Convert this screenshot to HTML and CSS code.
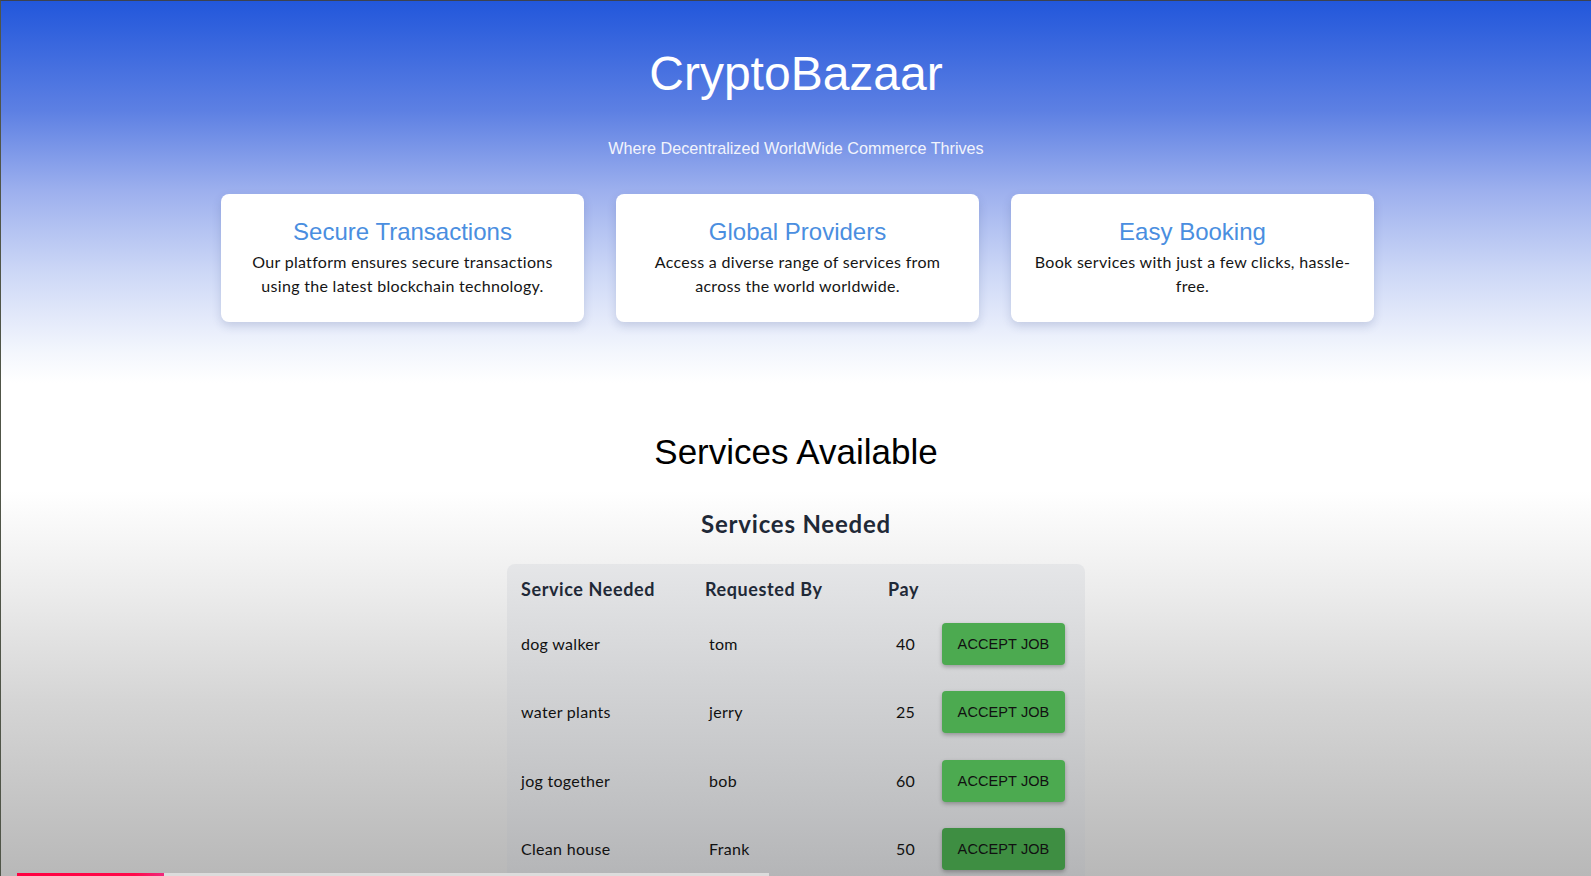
FILE: index.html
```html
<!DOCTYPE html>
<html lang="en">
<head>
<meta charset="utf-8">
<title>CryptoBazaar</title>
<link rel="stylesheet" href="styles.css">
</head>
<body>
<div class="page">
  <header class="hero">
    <h1 class="brand">CryptoBazaar</h1>
    <p class="tagline">Where Decentralized WorldWide Commerce Thrives</p>
    <div class="features">
      <div class="card">
        <h3 class="card-title">Secure Transactions</h3>
        <p class="card-text">Our platform ensures secure transactions using the latest blockchain technology.</p>
      </div>
      <div class="card">
        <h3 class="card-title">Global Providers</h3>
        <p class="card-text">Access a diverse range of services from across the world worldwide.</p>
      </div>
      <div class="card">
        <h3 class="card-title">Easy Booking</h3>
        <p class="card-text">Book services with just a few clicks, hassle-free.</p>
      </div>
    </div>
  </header>

  <section class="services">
    <h2 class="services-title">Services Available</h2>
    <h3 class="needed-title">Services Needed</h3>
    <div class="table-box">
      <table class="jobs">
        <colgroup>
          <col class="c-service">
          <col class="c-by">
          <col class="c-pay">
          <col class="c-action">
        </colgroup>
        <thead>
          <tr>
            <th>Service Needed</th>
            <th>Requested By</th>
            <th class="pay">Pay</th>
            <th></th>
          </tr>
        </thead>
        <tbody>
          <tr>
            <td>dog walker</td>
            <td class="by">tom</td>
            <td class="pay">40</td>
            <td><button class="accept">ACCEPT JOB</button></td>
          </tr>
          <tr>
            <td>water plants</td>
            <td class="by">jerry</td>
            <td class="pay">25</td>
            <td><button class="accept">ACCEPT JOB</button></td>
          </tr>
          <tr>
            <td>jog together</td>
            <td class="by">bob</td>
            <td class="pay">60</td>
            <td><button class="accept">ACCEPT JOB</button></td>
          </tr>
          <tr>
            <td>Clean house</td>
            <td class="by">Frank</td>
            <td class="pay">50</td>
            <td><button class="accept accept-hover">ACCEPT JOB</button></td>
          </tr>
        </tbody>
      </table>
    </div>
  </section>
</div>
<div class="progress"><span class="progress-played"></span></div>
</body>
</html>
```

FILE: styles.css
```css
html {
  background: #b9b9b9;
}

body {
  margin: 0;
  font-family: Lato, "Noto Sans", sans-serif;
  border-top: 1px solid #3c4250;
  border-left: 1px solid #505548;
  overflow: hidden;
  height: 875px;
}

.page {
  min-height: 1000px;
  background: linear-gradient(to bottom,
    #2257db 0px,
    #5d80e3 110px,
    #9db0ee 190px,
    #ccd7f6 270px,
    #f3f6fd 350px,
    #ffffff 382px,
    #ffffff 490px,
    #ececec 590px,
    #d5d5d5 700px,
    #b8b8b8 876px,
    #b0b0b0 1000px);
}

.hero {
  padding-top: 44px;
  text-align: center;
}

.brand {
  margin: 0;
  font-family: "Liberation Sans", Arial, sans-serif;
  font-weight: 400;
  font-size: 48px;
  line-height: 58px;
  color: #ffffff;
}

.tagline {
  margin: 35px 0 0;
  font-family: "Liberation Sans", Arial, sans-serif;
  font-size: 16.2px;
  line-height: 20px;
  color: #f2f4fc;
}

.features {
  margin-top: 36px;
  display: flex;
  justify-content: center;
  gap: 32px;
  padding-left: 3px;
}

.card {
  width: 363px;
  box-sizing: border-box;
  height: 128px;
  padding: 24px 21px 0;
  background: #ffffff;
  border-radius: 8px;
  box-shadow: 0 4px 10px rgba(40, 60, 120, 0.18);
}

.card-title {
  margin: 0 0 4px;
  font-family: "Liberation Sans", Arial, sans-serif;
  font-weight: 400;
  font-size: 24px;
  line-height: 28px;
  color: #4a8ee0;
}

.card-text {
  margin: 0;
  font-size: 16px;
  line-height: 24px;
  letter-spacing: 0.3px;
  color: #151515;
}

.services {
  text-align: center;
  padding-top: 110px;
}

.services-title {
  margin: 0;
  font-family: "Liberation Sans", Arial, sans-serif;
  font-weight: 400;
  font-size: 35px;
  line-height: 40px;
  color: #000000;
}

.needed-title {
  margin: 37px 0 0;
  font-size: 24px;
  line-height: 29px;
  font-weight: 700;
  letter-spacing: 0.8px;
  color: #1f2937;
}

.table-box {
  width: 576px;
  margin: 26px auto 0;
  padding-left: 2px;
  border-radius: 8px;
  background: linear-gradient(to bottom, #e5e6e8 0px, #d2d3d5 120px, #c0c1c3 240px, #b3b4b6 320px);
}

.jobs {
  width: 576px;
  border-collapse: collapse;
  table-layout: fixed;
  text-align: left;
}

.c-service { width: 184px; }
.c-by { width: 184px; }
.c-pay { width: 53px; }
.c-action { width: 155px; }

.jobs th {
  padding: 15px 12px 10px;
  font-size: 18px;
  line-height: 21px;
  font-weight: 700;
  letter-spacing: 0.6px;
  color: #1f2937;
}

.jobs td {
  padding: 13px 12px;
  height: 42px;
  font-size: 16px;
  line-height: 22px;
  letter-spacing: 0.3px;
  color: #111111;
  vertical-align: middle;
}

.jobs tbody tr {
  height: 68.3px;
}

.jobs td.by {
  padding-left: 16px;
}

.jobs th.pay {
  text-align: center;
  padding-left: 0;
  padding-right: 0;
}

.jobs td.pay {
  text-align: center;
  padding-left: 4px;
  padding-right: 0;
}

.accept {
  display: block;
  width: 123px;
  height: 42px;
  border: 0;
  border-radius: 4px;
  background: #4caa50;
  color: #111111;
  font-family: "Liberation Sans", Arial, sans-serif;
  font-size: 14.5px;
  letter-spacing: 0.1px;
  box-shadow: 0 2px 4px rgba(0, 0, 0, 0.28);
  cursor: pointer;
}

.accept-hover {
  background: #3e8e42;
}

.progress {
  position: fixed;
  left: 17px;
  bottom: 0;
  width: 752px;
  height: 3px;
  background: #dcdcdc;
}

.progress-played {
  display: block;
  width: 147px;
  height: 3px;
  background: linear-gradient(to right, #ff0040 0%, #ff0a4a 80%, #f0287c 100%);
}
```
